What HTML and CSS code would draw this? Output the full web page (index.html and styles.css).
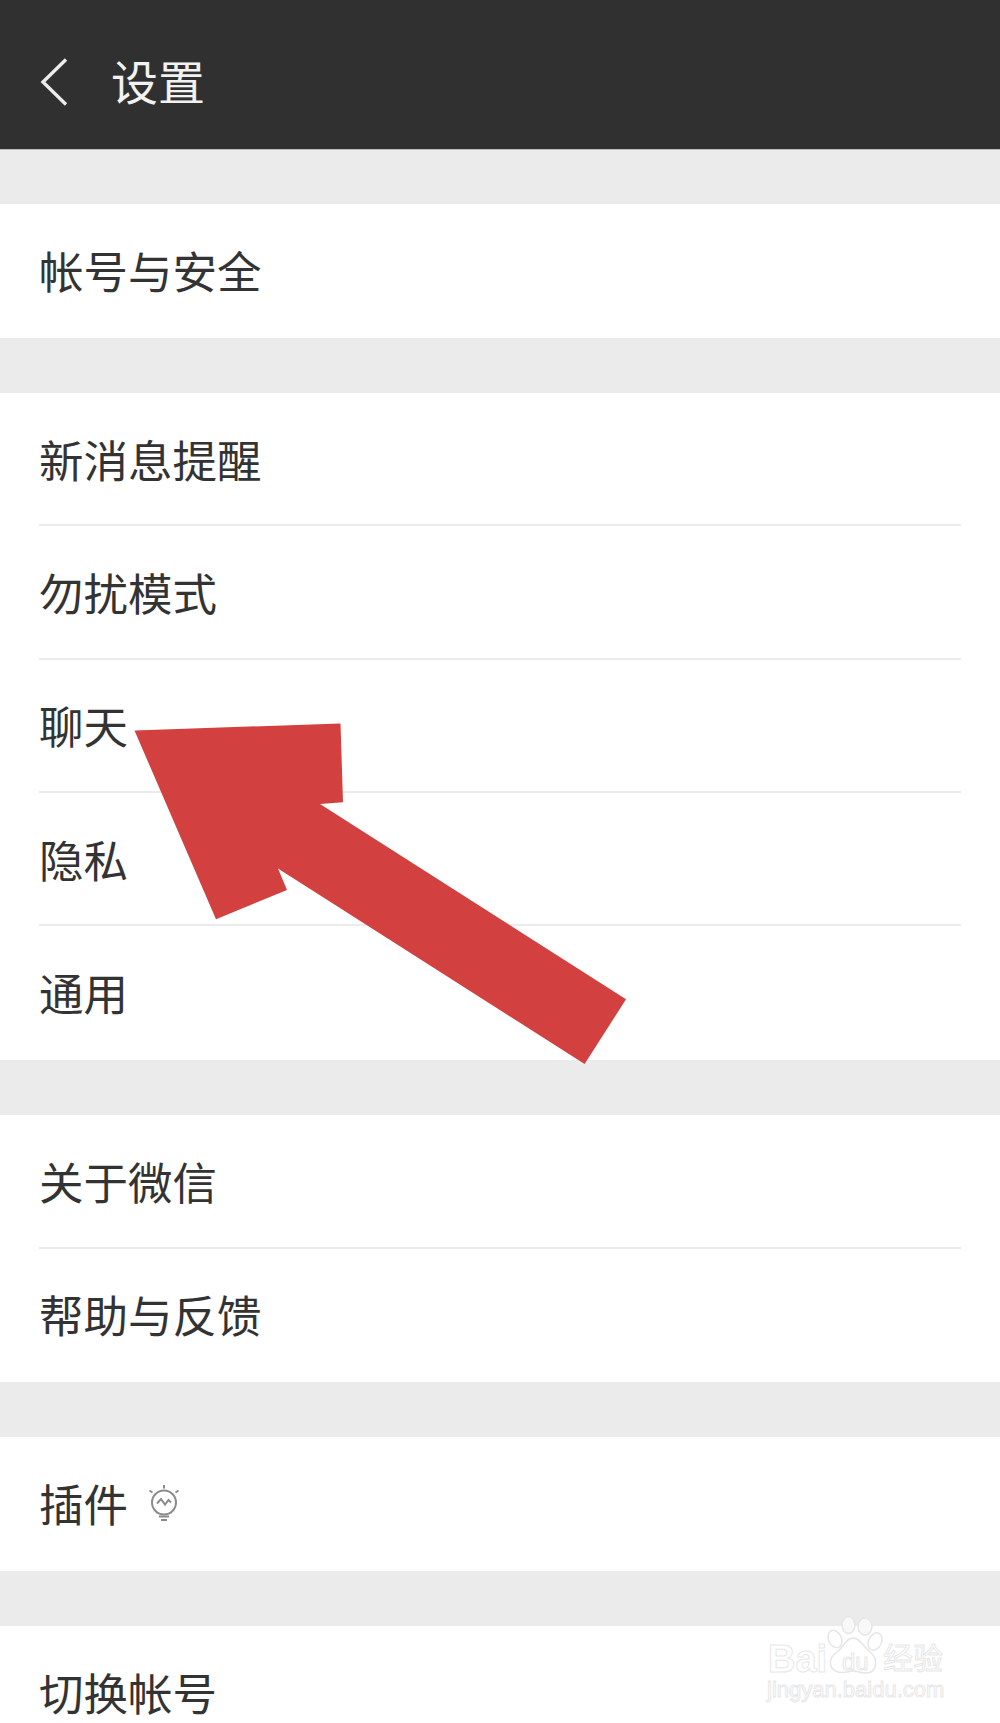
FILE: index.html
```html
<!DOCTYPE html>
<html lang="zh-CN">
<head>
<meta charset="utf-8">
<title>设置</title>
<link rel="stylesheet" href="styles.css">
</head>
<body>
<div class="screen">
  <header class="topbar">
    <svg class="back" width="28" height="48" viewBox="0 0 28 48"><path d="M26 1.500 L3 24 L26 46.500" fill="none" stroke="#ececec" stroke-width="3.400"/></svg>
    <span class="title">设置</span>
  </header>
  <main class="list">
    <section class="group"><div class="row"><span>帐号与安全</span></div></section>
    <section class="group">
      <div class="row"><span>新消息提醒</span></div>
      <div class="row"><span>勿扰模式</span></div>
      <div class="row"><span>聊天</span></div>
      <div class="row"><span>隐私</span></div>
      <div class="row"><span>通用</span></div>
    </section>
    <section class="group">
      <div class="row"><span>关于微信</span></div>
      <div class="row"><span>帮助与反馈</span></div>
    </section>
    <section class="group">
      <div class="row"><span>插件</span>
        <svg class="bulb" width="32" height="38" viewBox="0 0 32 38" fill="none" stroke="#8a8a8a" stroke-width="2">
          <circle cx="16" cy="18.500" r="12"/>
          <path d="M9 19.500 L13 15 L17 20.500 L20.500 16 L23 18.500"/>
          <path d="M11 32.500 H21 M13 36 H19"/>
          <path d="M16 1 V4.500 M1.500 6.500 L4.500 8.500 M30.500 6.500 L27.500 8.500"/>
        </svg>
      </div>
    </section>
    <section class="group"><div class="row"><span>切换帐号</span></div></section>
  </main>
  <svg class="arrow" width="1000" height="1723" viewBox="0 0 1000 1723"><polygon points="134.500,730.500 340.500,723.500 343,802.300 320,804 626,999.300 584.600,1064 278,868.500 287,890 216,919.300" fill="#d24040"/></svg>
  <div class="watermark">
    <svg class="paw" width="64" height="64" viewBox="0 0 64 64" fill="none" stroke="#e6e6e6" stroke-width="1.500">
      <ellipse cx="25.500" cy="11" rx="6.500" ry="8.500" fill="#f8f8f8"/>
      <ellipse cx="42" cy="12.500" rx="7" ry="8.500" fill="#f8f8f8"/>
      <ellipse cx="12" cy="25" rx="6.500" ry="9" transform="rotate(-25 12 25)"/>
      <ellipse cx="52" cy="27.500" rx="6.500" ry="9" transform="rotate(25 52 27.500)"/>
      <path d="M30 24 C37 24 40 32 47 38 C56 45 54 59 43 59 C37 59 35 57 30 57 C25 57 22 60 15 58 C5 55 5 44 14 38 C21 33 23 24 30 24 Z" fill="#fff"/>
    </svg>
    <span class="wm-text wm-bai">Bai</span>
    <span class="wm-text wm-du">du</span>
    <span class="wm-text wm-cn">经验</span>
    <span class="wm-text wm-url">jingyan.baidu.com</span>
  </div>
</div>
</body>
</html>
```
FILE: styles.css
```css
html, body {
  margin: 0;
  padding: 0;
}
body {
  font-family: "Noto Sans CJK SC", "Noto Sans", sans-serif;
  background: #ebebeb;
}
.screen {
  position: relative;
  width: 1000px;
  height: 1723px;
  overflow: hidden;
  background: #ebebeb;
}
.topbar {
  height: 135px;
  background: #303030;
  border-bottom: 1px solid #bdbdbd;
  display: flex;
  align-items: center;
  padding-left: 40px;
  padding-top: 14px;
}
.back {
  flex: none;
  margin-right: 43px;
}
.title {
  font-size: 47px;
  line-height: 1;
  color: #f2f2f2;
  margin-bottom: 4px;
}
.list {
  display: flex;
  flex-direction: column;
  gap: 55.500px;
  padding-top: 54.300px;
}
.group {
  background: #fff;
  display: flex;
  flex-direction: column;
}
.row {
  height: 133.330px;
  box-sizing: border-box;
  margin-left: 39px;
  margin-right: 39px;
  padding-bottom: 1px;
  display: flex;
  align-items: center;
  font-size: 44.500px;
  color: #333;
  border-bottom: 2px solid #ebebeb;
}
.row:last-child {
  border-bottom-color: transparent;
}
.bulb {
  margin-left: 20px;
  flex: none;
}
.arrow {
  position: absolute;
  left: 0;
  top: 0;
  pointer-events: none;
}
.watermark {
  position: absolute;
  left: 760px;
  top: 1610px;
  width: 200px;
  height: 100px;
}
.paw {
  position: absolute;
  left: 63px;
  top: 4px;
}
.wm-text {
  position: absolute;
  color: #fff;
  -webkit-text-stroke: 1px #e8e8e8;
  font-family: "Liberation Sans", sans-serif;
  line-height: 1;
  white-space: nowrap;
}
.wm-bai {
  left: 8px;
  top: 30px;
  font-size: 38px;
  font-weight: 700;
}
.wm-du {
  left: 82px;
  top: 40px;
  font-size: 24px;
}
.wm-cn {
  left: 123px;
  top: 31px;
  font-size: 30px;
  font-family: "Noto Sans CJK SC", sans-serif;
}
.wm-url {
  left: 7px;
  top: 69px;
  font-size: 22px;
}
```
